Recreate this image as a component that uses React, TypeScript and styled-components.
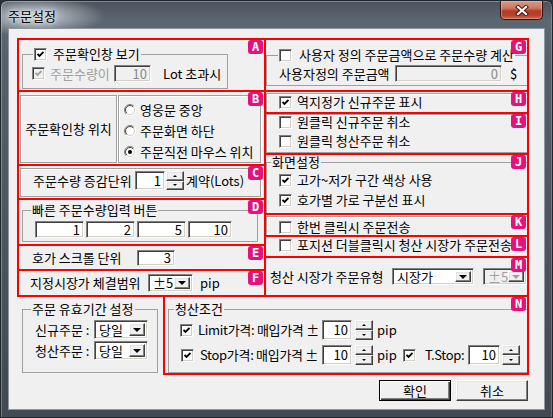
import React, { useId } from "react";
import styled, { createGlobalStyle, css } from "styled-components";

const GlobalStyle = createGlobalStyle`
  * { box-sizing: border-box; }
  html, body { margin: 0; padding: 0; }
  body {
    background: #2b323a;
    font-family: "Noto Sans CJK KR", "Noto Sans", sans-serif;
    font-size: 13px;
    color: #000;
  }
`;

const sunken = css`
  border: 1px solid;
  border-color: #808080 #ffffff #ffffff #808080;
  box-shadow: inset 1px 1px 0 #404040, inset -1px -1px 0 #d4d0c8;
`;

const raised = css`
  border: 1px solid;
  border-color: #ffffff #404040 #404040 #ffffff;
  box-shadow: inset -1px -1px 0 #808080, inset 1px 1px 0 #e3e3e3;
  background: #f0f0f0;
`;

const Window = styled.div`
  width: 553px;
  height: 418px;
  display: flex;
  flex-direction: column;
  border: 1px solid #1e252c;
  border-radius: 7px 7px 0 0;
  overflow: hidden;
  background: radial-gradient(ellipse 70px 20px at 34px 15px, rgba(222, 228, 233, 0.85), rgba(222, 228, 233, 0) 100%),
    linear-gradient(180deg, #4a535d 0px, #5d6771 20px, #56606a 60px, #414a53 100%);
  box-shadow: inset 1px 1px 0 rgba(255, 255, 255, 0.3), inset -1px 0 0 rgba(255, 255, 255, 0.2);
`;

const TitleBar = styled.div`
  flex: none;
  height: 27px;
  display: flex;
  align-items: flex-start;
`;

const Title = styled.span`
  margin: 8px 0 0 7px;
  line-height: 14px;
  text-shadow: 0 0 3px #eef1f4, 0 0 7px #e4e8ec, 0 0 12px #d8dde2;
`;

const CloseButton = styled.div`
  margin-left: auto;
  margin-right: 9px;
  width: 43px;
  height: 19px;
  border: 1px solid #3b0f08;
  border-top: none;
  border-radius: 0 0 5px 5px;
  background: linear-gradient(180deg, #d69a89 0%, #ca7762 40%, #b23c24 56%, #b8432b 80%, #cf6a4c 100%);
  box-shadow: inset 0 0 0 1px rgba(255, 210, 190, 0.4);
  display: flex;
  align-items: center;
  justify-content: center;
`;

const Client = styled.div`
  flex: none;
  margin: 0 7px;
  height: 382px;
  background: #f0f0f0;
  border: 1px solid #8e979f;
  padding: 9px 15px 0 8px;
  display: flex;
  flex-direction: column;
`;

const TopArea = styled.div`
  display: flex;
`;

const Column = styled.div<{ $w: number }>`
  flex: none;
  width: ${(p) => p.$w}px;
  display: flex;
  flex-direction: column;
  & + & {
    margin-left: -2px;
  }
`;

const MarkBox = styled.div<{ $h: number; $w?: number; $ml?: number }>`
  position: relative;
  flex: none;
  height: ${(p) => p.$h}px;
  ${(p) => p.$w !== undefined && `width: ${p.$w}px;`}
  margin-left: ${(p) => p.$ml ?? 0}px;
  border: 2px solid #ff0000;
  overflow: hidden;
  & + & {
    margin-top: -2px;
  }
`;

const Badge = styled.span`
  position: absolute;
  top: 0;
  right: 1px;
  z-index: 2;
  width: 15px;
  height: 14px;
  border-radius: 3px;
  background: #e3137c;
  color: #fff;
  font: bold 12px/14px "DejaVu Sans Mono", monospace;
  text-align: center;
`;

const BottomArea = styled.div`
  display: flex;
  align-items: flex-start;
  margin-top: -2px;
`;

const ButtonRow = styled.div`
  display: flex;
  justify-content: flex-end;
  gap: 5px;
  margin-top: 5px;
  padding-right: 1px;
`;

const DialogButton = styled.button<{ $primary?: boolean }>`
  width: 72px;
  height: 21px;
  padding: 0;
  font: 13px/14px "Noto Sans CJK KR", sans-serif;
  color: #000;
  background: #f0f0f0;
  ${(p) =>
    p.$primary
      ? css`
          border: 1px solid #000;
          box-shadow: inset 1px 1px 0 #fff, inset -1px -1px 0 #404040, inset -2px -2px 0 #808080;
        `
      : raised}
`;

const Group = styled.fieldset<{ $w: number; $h: number; $ml?: number; $mt?: number }>`
  flex: none;
  width: ${(p) => p.$w}px;
  height: ${(p) => p.$h}px;
  margin: ${(p) => p.$mt ?? 0}px 0 0 ${(p) => p.$ml ?? 0}px;
  padding: 0;
  min-width: 0;
  border: 1px solid #a0a0a0;
`;

const Legend = styled.legend<{ $ml: number }>`
  margin-left: ${(p) => p.$ml}px;
  padding: 0 1px;
  height: 14px;
  line-height: 14px;
  white-space: nowrap;
`;

const Panel = styled.div<{ $w: number; $h: number; $ml?: number; $mt?: number; $center?: boolean }>`
  flex: none;
  width: ${(p) => p.$w}px;
  height: ${(p) => p.$h}px;
  margin: ${(p) => p.$mt ?? 0}px 0 0 ${(p) => p.$ml ?? 0}px;
  border: 1px solid #a0a0a0;
  box-shadow: inset 1px 1px 0 #fff, 1px 1px 0 #fff;
  ${(p) =>
    p.$center &&
    css`
      display: flex;
      align-items: center;
      justify-content: center;
    `}
`;

const Split = styled.div`
  display: flex;
  gap: 1px;
  padding: 3px 0 0 1px;
`;

const RadioList = styled.div`
  display: flex;
  flex-direction: column;
  padding: 3px 0 0 5px;
`;

const Row = styled.div<{ $mt?: number; $pl?: number; $h?: number }>`
  display: flex;
  align-items: center;
  height: ${(p) => p.$h ?? 14}px;
  margin-top: ${(p) => p.$mt ?? 0}px;
  padding-left: ${(p) => p.$pl ?? 0}px;
  white-space: nowrap;
`;

const Text = styled.span<{ $w?: number; $ml?: number; $off?: boolean; $tight?: boolean }>`
  display: inline-block;
  flex: none;
  line-height: 14px;
  ${(p) => p.$w !== undefined && `width: ${p.$w}px;`}
  margin-left: ${(p) => p.$ml ?? 0}px;
  color: ${(p) => (p.$off ? "#a0a0a0" : "#000")};
  letter-spacing: ${(p) => (p.$tight ? "-0.3px" : "normal")};
`;

const CheckBox = styled.span<{ $ml?: number; $off?: boolean }>`
  flex: none;
  width: 13px;
  height: 13px;
  margin-left: ${(p) => p.$ml ?? 0}px;
  display: inline-flex;
  align-items: center;
  justify-content: center;
  ${sunken}
  background: ${(p) => (p.$off ? "#f0f0f0" : "#fff")};
`;

const RadioDot = styled.span<{ $ml?: number }>`
  flex: none;
  display: inline-flex;
  width: 12px;
  height: 12px;
  margin-left: ${(p) => p.$ml ?? 0}px;
`;

const Field = styled.div<{ $w: number; $h: number; $ml?: number; $off?: boolean }>`
  flex: none;
  width: ${(p) => p.$w}px;
  height: ${(p) => p.$h}px;
  margin-left: ${(p) => p.$ml ?? 0}px;
  ${sunken}
  background: ${(p) => (p.$off ? "#f0f0f0" : "#fff")};
  color: ${(p) => (p.$off ? "#8a8a8a" : "#000")};
  display: flex;
  align-items: center;
  justify-content: flex-end;
  padding-right: 3px;
  line-height: 14px;
`;

const SpinBox = styled.div<{ $h: number; $ml?: number }>`
  flex: none;
  width: 18px;
  height: ${(p) => p.$h}px;
  margin-left: ${(p) => p.$ml ?? 0}px;
  display: flex;
  flex-direction: column;
`;

const SpinHalf = styled.div`
  flex: 1;
  ${raised}
  display: flex;
  align-items: center;
  justify-content: center;
`;

const SmallArrow = styled.span<{ $up?: boolean }>`
  width: 0;
  height: 0;
  border-left: 2px solid transparent;
  border-right: 2px solid transparent;
  ${(p) => (p.$up ? "border-bottom: 2px solid #000;" : "border-top: 2px solid #000;")}
`;

const ComboBox = styled.div<{ $w: number; $h: number; $ml?: number; $off?: boolean }>`
  flex: none;
  width: ${(p) => p.$w}px;
  height: ${(p) => p.$h}px;
  margin-left: ${(p) => p.$ml ?? 0}px;
  ${sunken}
  background: ${(p) => (p.$off ? "#f0f0f0" : "#fff")};
  display: flex;
  padding: 2px;
`;

const ComboText = styled.span<{ $off?: boolean }>`
  flex: 1;
  padding-left: 2px;
  color: ${(p) => (p.$off ? "#a0a0a0" : "#000")};
  line-height: 14px;
  align-self: center;
`;

const ComboButton = styled.span`
  flex: none;
  width: 16px;
  ${raised}
  display: flex;
  align-items: center;
  justify-content: center;
`;

const DownArrow = styled.span<{ $off?: boolean }>`
  width: 0;
  height: 0;
  border-left: 4px solid transparent;
  border-right: 4px solid transparent;
  border-top: 4px solid ${(p) => (p.$off ? "#a0a0a0" : "#000")};
`;

function Check({ on, off, ml }: { on?: boolean; off?: boolean; ml?: number }) {
  return (
    <CheckBox $off={off} $ml={ml}>
      {on && (
        <svg width="7" height="7" viewBox="0 0 7 7">
          <polyline points="0.5,3 2.5,5 6.5,1" fill="none" stroke={off ? "#a0a0a0" : "#000"} strokeWidth="1.8" />
        </svg>
      )}
    </CheckBox>
  );
}

function Radio({ on }: { on?: boolean }) {
  const id = useId().replace(/[^a-zA-Z0-9]/g, "");
  return (
    <RadioDot>
      <svg width="12" height="12" viewBox="0 0 12 12">
        <defs>
          <linearGradient id={`o${id}`} x1="0" y1="0" x2="1" y2="1">
            <stop offset="0.5" stopColor="#808080" />
            <stop offset="0.5" stopColor="#ffffff" />
          </linearGradient>
          <linearGradient id={`i${id}`} x1="0" y1="0" x2="1" y2="1">
            <stop offset="0.5" stopColor="#404040" />
            <stop offset="0.5" stopColor="#d4d0c8" />
          </linearGradient>
        </defs>
        <circle cx="6" cy="6" r="5.5" fill="none" stroke={`url(#o${id})`} />
        <circle cx="6" cy="6" r="4.5" fill="#fff" stroke={`url(#i${id})`} />
        {on && <circle cx="6" cy="6" r="2" fill="#000" />}
      </svg>
    </RadioDot>
  );
}

function Spin({ h, ml }: { h: number; ml?: number }) {
  return (
    <SpinBox $h={h} $ml={ml}>
      <SpinHalf>
        <SmallArrow $up />
      </SpinHalf>
      <SpinHalf>
        <SmallArrow />
      </SpinHalf>
    </SpinBox>
  );
}

function Combo({ w, h, ml, text, off }: { w: number; h: number; ml?: number; text: string; off?: boolean }) {
  return (
    <ComboBox $w={w} $h={h} $ml={ml} $off={off}>
      <ComboText $off={off}>{text}</ComboText>
      <ComboButton>
        <DownArrow $off={off} />
      </ComboButton>
    </ComboBox>
  );
}

function Mark({ letter, h, w, ml, children }: { letter: string; h: number; w?: number; ml?: number; children?: React.ReactNode }) {
  return (
    <MarkBox $h={h} $w={w} $ml={ml}>
      {children}
      <Badge>{letter}</Badge>
    </MarkBox>
  );
}

function CheckRow({ on, label, mt, pl = 12 }: { on?: boolean; label: string; mt?: number; pl?: number }) {
  return (
    <Row $mt={mt} $pl={pl}>
      <Check on={on} />
      <Text $ml={5}>{label}</Text>
    </Row>
  );
}

export default function App() {
  return (
    <>
      <GlobalStyle />
      <Window>
        <TitleBar>
          <Title>주문설정</Title>
          <CloseButton>
            <svg width="14" height="11" viewBox="0 0 14 11">
              <path d="M3 2 L11 9 M11 2 L3 9" stroke="#4a1208" strokeWidth="4" strokeLinecap="square" />
              <path d="M3 2 L11 9 M11 2 L3 9" stroke="#fff" strokeWidth="2.2" strokeLinecap="square" />
            </svg>
          </CloseButton>
        </TitleBar>
        <Client>
          <TopArea>
            <Column $w={249}>
              <Mark letter="A" h={54}>
                <Group $ml={3} $mt={7} $w={206} $h={42}>
                  <Legend $ml={10}>
                    <Row>
                      <Check on />
                      <Text $ml={6}>주문확인창 보기</Text>
                    </Row>
                  </Legend>
                  <Row $mt={4} $pl={9} $h={17}>
                    <Check on off />
                    <Text $ml={5} $w={64} $off>
                      주문수량이
                    </Text>
                    <Field $w={37} $h={17} $off>
                      10
                    </Field>
                    <Text $ml={12}>Lot 초과시</Text>
                  </Row>
                </Group>
              </Mark>
              <Mark letter="B" h={76}>
                <Split>
                  <Panel $w={97} $h={68} $center>
                    <Text>주문확인창 위치</Text>
                  </Panel>
                  <Panel $w={143} $h={68}>
                    <RadioList>
                      <Row $h={21}>
                        <Radio />
                        <Text $ml={4}>영웅문 중앙</Text>
                      </Row>
                      <Row $h={21}>
                        <Radio />
                        <Text $ml={4}>주문화면 하단</Text>
                      </Row>
                      <Row $h={21}>
                        <Radio on />
                        <Text $ml={4}>주문직전 마우스 위치</Text>
                      </Row>
                    </RadioList>
                  </Panel>
                </Split>
              </Mark>
              <Mark letter="C" h={36}>
                <Panel $ml={1} $mt={2} $w={241} $h={29}>
                  <Row $h={23} $pl={12}>
                    <Text $w={102}>주문수량 증감단위</Text>
                    <Field $w={30} $h={19}>
                      1
                    </Field>
                    <Spin h={19} ml={1} />
                    <Text $ml={2}>계약(Lots)</Text>
                  </Row>
                </Panel>
              </Mark>
              <Mark letter="D" h={48}>
                <Group $ml={3} $mt={3} $w={236} $h={39}>
                  <Legend $ml={8}>빠른 주문수량입력 버튼</Legend>
                  <Row $mt={4} $pl={12} $h={17}>
                    <Field $w={49} $h={17}>
                      1
                    </Field>
                    <Field $w={49} $h={17} $ml={2}>
                      2
                    </Field>
                    <Field $w={49} $h={17} $ml={2}>
                      5
                    </Field>
                    <Field $w={44} $h={17} $ml={2}>
                      10
                    </Field>
                  </Row>
                </Group>
              </Mark>
              <Mark letter="E" h={27}>
                <Row $h={23} $pl={13}>
                  <Text $w={105}>호가 스크롤 단위</Text>
                  <Field $w={38} $h={16}>
                    3
                  </Field>
                </Row>
              </Mark>
              <Mark letter="F" h={28}>
                <Row $h={24} $pl={11}>
                  <Text $w={118}>지정시장가 체결범위</Text>
                  <Combo w={45} h={18} text="±5" />
                  <Text $ml={7}>pip</Text>
                </Row>
              </Mark>
            </Column>
            <Column $w={265}>
              <Mark letter="G" h={54}>
                <Group $mt={8} $w={264} $h={38}>
                  <Legend $ml={11}>
                    <Row>
                      <Check />
                      <Text $ml={7}>사용자 정의 주문금액으로 주문수량 계산</Text>
                    </Row>
                  </Legend>
                  <Row $mt={3} $pl={12} $h={17}>
                    <Text $w={116}>사용자정의 주문금액</Text>
                    <Field $w={107} $h={17} $off>
                      0
                    </Field>
                    <Text $ml={8}>$</Text>
                  </Row>
                </Group>
              </Mark>
              <Mark letter="H" h={24}>
                <Panel $mt={1} $w={270} $h={30}>
                  <CheckRow on mt={1} label="역지정가 신규주문 표시" />
                </Panel>
              </Mark>
              <Mark letter="I" h={43}>
                <Panel $w={270} $h={39}>
                  <CheckRow label="원클릭 신규주문 취소" />
                  <CheckRow mt={5} label="원클릭 청산주문 취소" />
                </Panel>
              </Mark>
              <Mark letter="J" h={62}>
                <Group $w={264} $h={64}>
                  <Legend $ml={4}>화면설정</Legend>
                  <CheckRow on mt={4} label="고가~저가 구간 색상 사용" />
                  <CheckRow on mt={6} label="호가별 가로 구분선 표시" />
                </Group>
              </Mark>
              <Mark letter="K" h={24}>
                <Panel $mt={1} $w={270} $h={30}>
                  <CheckRow mt={3} label="한번 클릭시 주문전송" />
                </Panel>
              </Mark>
              <Mark letter="L" h={23}>
                <CheckRow mt={1} pl={13} label="포지션 더블클릭시 청산 시장가 주문전송" />
              </Mark>
              <Mark letter="M" h={41}>
                <Row $h={37} $pl={4}>
                  <Text $w={122}>청산 시장가 주문유형</Text>
                  <Combo w={82} h={17} text="시장가" />
                  <Combo w={44} h={17} ml={9} text="±5" off />
                </Row>
              </Mark>
            </Column>
          </TopArea>
          <BottomArea>
            <Group $ml={5} $mt={7} $w={136} $h={71}>
              <Legend $ml={8}>주문 유효기간 설정</Legend>
              <Row $mt={4} $pl={12} $h={19}>
                <Text $w={59}>신규주문 :</Text>
                <Combo w={54} h={19} text="당일" />
              </Row>
              <Row $mt={2} $pl={12} $h={19}>
                <Text $w={59}>청산주문 :</Text>
                <Combo w={54} h={19} text="당일" />
              </Row>
            </Group>
            <Mark letter="N" h={80} w={366} ml={5}>
              <Group $ml={3} $mt={5} $w={362} $h={71}>
                <Legend $ml={5}>청산조건</Legend>
                <Row $mt={4} $pl={11} $h={20}>
                  <Check on />
                  <Text $ml={5} $w={124} $tight>
                    Limit가격: 매입가격 ±
                  </Text>
                  <Field $w={30} $h={20}>
                    10
                  </Field>
                  <Spin h={20} ml={3} />
                  <Text $ml={4}>pip</Text>
                </Row>
                <Row $mt={5} $pl={12} $h={20}>
                  <Check on />
                  <Text $ml={6} $w={122} $tight>
                    Stop가격: 매입가격 ±
                  </Text>
                  <Field $w={30} $h={20}>
                    10
                  </Field>
                  <Spin h={20} ml={3} />
                  <Text $ml={4} $w={26}>
                    pip
                  </Text>
                  <Check on />
                  <Text $ml={9} $w={43} $tight>
                    T.Stop:
                  </Text>
                  <Field $w={32} $h={20}>
                    10
                  </Field>
                  <Spin h={20} ml={2} />
                </Row>
              </Group>
            </Mark>
          </BottomArea>
          <ButtonRow>
            <DialogButton $primary>확인</DialogButton>
            <DialogButton>취소</DialogButton>
          </ButtonRow>
        </Client>
      </Window>
    </>
  );
}
